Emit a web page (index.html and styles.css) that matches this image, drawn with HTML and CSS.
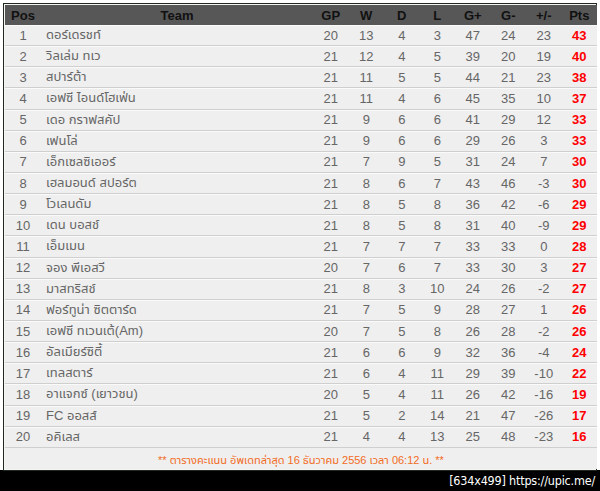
FILE: index.html
```html
<!DOCTYPE html>
<html lang="th">
<head>
<meta charset="utf-8">
<title>ตารางคะแนน</title>
<link rel="stylesheet" href="styles.css">
</head>
<body>
<div class="page">
  <div class="frame">
    <table class="standings">
      <colgroup>
        <col class="c-pos"><col class="c-team"><col class="c-n"><col class="c-n"><col class="c-n"><col class="c-n"><col class="c-n"><col class="c-n"><col class="c-n"><col class="c-n">
      </colgroup>
      <thead>
        <tr><th>Pos</th><th>Team</th><th>GP</th><th>W</th><th>D</th><th>L</th><th>G+</th><th>G-</th><th>+/-</th><th>Pts</th></tr>
      </thead>
      <tbody>
        <tr><td>1</td><td class="team">ดอร์เดรชท์</td><td>20</td><td>13</td><td>4</td><td>3</td><td>47</td><td>24</td><td>23</td><td class="pts">43</td></tr>
        <tr><td>2</td><td class="team">วิลเล่ม ทเว</td><td>21</td><td>12</td><td>4</td><td>5</td><td>39</td><td>20</td><td>19</td><td class="pts">40</td></tr>
        <tr><td>3</td><td class="team">สปาร์ต้า</td><td>21</td><td>11</td><td>5</td><td>5</td><td>44</td><td>21</td><td>23</td><td class="pts">38</td></tr>
        <tr><td>4</td><td class="team">เอฟซี ไอนด์โฮเฟ่น</td><td>21</td><td>11</td><td>4</td><td>6</td><td>45</td><td>35</td><td>10</td><td class="pts">37</td></tr>
        <tr><td>5</td><td class="team">เดอ กราฟสคัป</td><td>21</td><td>9</td><td>6</td><td>6</td><td>41</td><td>29</td><td>12</td><td class="pts">33</td></tr>
        <tr><td>6</td><td class="team">เฟนโล่</td><td>21</td><td>9</td><td>6</td><td>6</td><td>29</td><td>26</td><td>3</td><td class="pts">33</td></tr>
        <tr><td>7</td><td class="team">เอ็กเซลซิเออร์</td><td>21</td><td>7</td><td>9</td><td>5</td><td>31</td><td>24</td><td>7</td><td class="pts">30</td></tr>
        <tr><td>8</td><td class="team">เฮลมอนด์ สปอร์ต</td><td>21</td><td>8</td><td>6</td><td>7</td><td>43</td><td>46</td><td>-3</td><td class="pts">30</td></tr>
        <tr><td>9</td><td class="team">โวเลนดัม</td><td>21</td><td>8</td><td>5</td><td>8</td><td>36</td><td>42</td><td>-6</td><td class="pts">29</td></tr>
        <tr><td>10</td><td class="team">เดน บอสช์</td><td>21</td><td>8</td><td>5</td><td>8</td><td>31</td><td>40</td><td>-9</td><td class="pts">29</td></tr>
        <tr><td>11</td><td class="team">เอ็มเมน</td><td>21</td><td>7</td><td>7</td><td>7</td><td>33</td><td>33</td><td>0</td><td class="pts">28</td></tr>
        <tr><td>12</td><td class="team">จอง พีเอสวี</td><td>20</td><td>7</td><td>6</td><td>7</td><td>33</td><td>30</td><td>3</td><td class="pts">27</td></tr>
        <tr><td>13</td><td class="team">มาสทริสช์</td><td>21</td><td>8</td><td>3</td><td>10</td><td>24</td><td>26</td><td>-2</td><td class="pts">27</td></tr>
        <tr><td>14</td><td class="team">ฟอร์ทูน่า ซิตตาร์ด</td><td>21</td><td>7</td><td>5</td><td>9</td><td>28</td><td>27</td><td>1</td><td class="pts">26</td></tr>
        <tr><td>15</td><td class="team">เอฟซี ทเวนเต้(Am)</td><td>20</td><td>7</td><td>5</td><td>8</td><td>26</td><td>28</td><td>-2</td><td class="pts">26</td></tr>
        <tr><td>16</td><td class="team">อัลเมียร์ซิตี้</td><td>21</td><td>6</td><td>6</td><td>9</td><td>32</td><td>36</td><td>-4</td><td class="pts">24</td></tr>
        <tr><td>17</td><td class="team">เทลสตาร์</td><td>21</td><td>6</td><td>4</td><td>11</td><td>29</td><td>39</td><td>-10</td><td class="pts">22</td></tr>
        <tr><td>18</td><td class="team">อาแจกซ์ (เยาวชน)</td><td>20</td><td>5</td><td>4</td><td>11</td><td>26</td><td>42</td><td>-16</td><td class="pts">19</td></tr>
        <tr><td>19</td><td class="team">FC ออสส์</td><td>21</td><td>5</td><td>2</td><td>14</td><td>21</td><td>47</td><td>-26</td><td class="pts">17</td></tr>
        <tr><td>20</td><td class="team">อคิเลส</td><td>21</td><td>4</td><td>4</td><td>13</td><td>25</td><td>48</td><td>-23</td><td class="pts">16</td></tr>
      </tbody>
      <tfoot>
        <tr><td colspan="10" class="note">** ตารางคะแนน อัพเดทล่าสุด 16 ธันวาคม 2556 เวลา 06:12 น. **</td></tr>
      </tfoot>
    </table>
  </div>
</div>
<div class="watermark"><span>[634x499]</span> https://upic.me/</div>
</body>
</html>
```

FILE: styles.css
```css
html, body {
  margin: 0;
  padding: 0;
  background: #000;
}
body {
  width: 600px;
  height: 491px;
  overflow: hidden;
  font-family: "Liberation Sans", Arial, "Noto Sans Thai", "Noto Sans", sans-serif;
}
.page {
  background: #fff;
  padding: 3px;
  height: 464px;
}
.frame {
  border: 1px solid #1e2a1e;
  padding: 1px;
  background: #f4f4f4;
}
.standings {
  width: 592px;
  border-collapse: collapse;
  table-layout: fixed;
  font-size: 13px;
  color: #666;
}
.c-pos { width: 36px; }
.c-team { width: 272px; }
.standings th {
  background: #575757;
  color: #111;
  font-weight: bold;
  height: 20px;
  padding: 0;
  text-align: center;
}
.standings tbody td {
  background: #efefef;
  height: 20.15px;
  padding: 0;
  text-align: center;
  border-bottom: 1px solid #cfcfcf;
  box-shadow: inset 0 1px 0 #fafafa;
}
.standings tbody td.team {
  text-align: left;
  padding-left: 5px;
}
.standings tbody td.pts {
  color: #f00;
  font-weight: bold;
}
.standings tfoot td.note {
  background: #efefef;
  height: 18px;
  padding: 3px 0 0;
  text-align: center;
  color: #f26c1e;
  font-size: 11px;
  line-height: 14px;
}
.watermark {
  height: 21px;
  color: #fff;
  text-align: right;
  padding-right: 5px;
  font-family: "DejaVu Sans Condensed", "DejaVu Sans", sans-serif;
  font-size: 12.5px;
  letter-spacing: -0.2px;
  line-height: 22px;
}
```
